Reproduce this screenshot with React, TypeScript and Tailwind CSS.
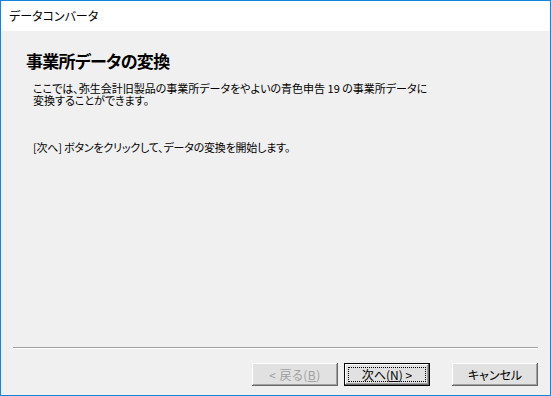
import React from "react";

const font = "[font-family:'Noto_Sans_CJK_JP',sans-serif] [font-feature-settings:'palt']";

const btn3d =
  "shadow-[inset_-1px_-1px_0_#696969,inset_1px_1px_0_#ffffff,inset_-2px_-2px_0_#a0a0a0,inset_2px_2px_0_#e3e3e3]";

export default function App() {
  return (
    <div
      className={`w-[551px] h-[396px] border border-[#1883d7] bg-[#f0f0f0] flex flex-col text-black ${font}`}
    >
      <div className="h-[30px] bg-white flex items-center pl-[8px] text-[12px] leading-none">
        データコンバータ
      </div>
      <div className="flex-1 flex flex-col">
        <div className="pl-[25px] pt-[19px] text-[17px] font-bold leading-[22px] tracking-[-0.7px]">
          事業所データの変換
        </div>
        <div className="pl-[32px] pt-[10px] text-[11px] leading-[12px]">
          <p>
            ここでは、弥生会計旧製品の事業所データをやよいの青色申告 19 の事業所データに
            <br />
            変換することができます。
          </p>
          <p className="mt-[35px] tracking-[-0.2px]">[次へ] ボタンをクリックして、データの変換を開始します。</p>
        </div>
        <div className="flex-1" />
        <div className="mx-[12px] h-[2px] border-t border-[#a0a0a0] border-b border-b-white" />
        <div className="h-[46px] flex items-start pt-[14px] pr-[12px] justify-end text-[12px]">
          <div
            className={`w-[86px] h-[23px] bg-[#e1e1e1] ${btn3d} flex items-center justify-center text-[#a0a0a0] tracking-[0.5px]`}
          >
            &lt; 戻る(<span className="underline">B</span>)
          </div>
          <div className="ml-[6px] w-[86px] h-[23px] border border-black bg-[#e1e1e1] flex">
            <div className={`flex-1 ${btn3d} flex items-stretch p-[3px]`}>
              <div className="flex-1 border border-dotted border-black flex items-center justify-center">
                次へ(<span className="underline">N</span>) &gt;
              </div>
            </div>
          </div>
          <div
            className={`ml-[22px] w-[86px] h-[23px] bg-[#e1e1e1] ${btn3d} flex items-center justify-center`}
          >
            キャンセル
          </div>
        </div>
      </div>
    </div>
  );
}
